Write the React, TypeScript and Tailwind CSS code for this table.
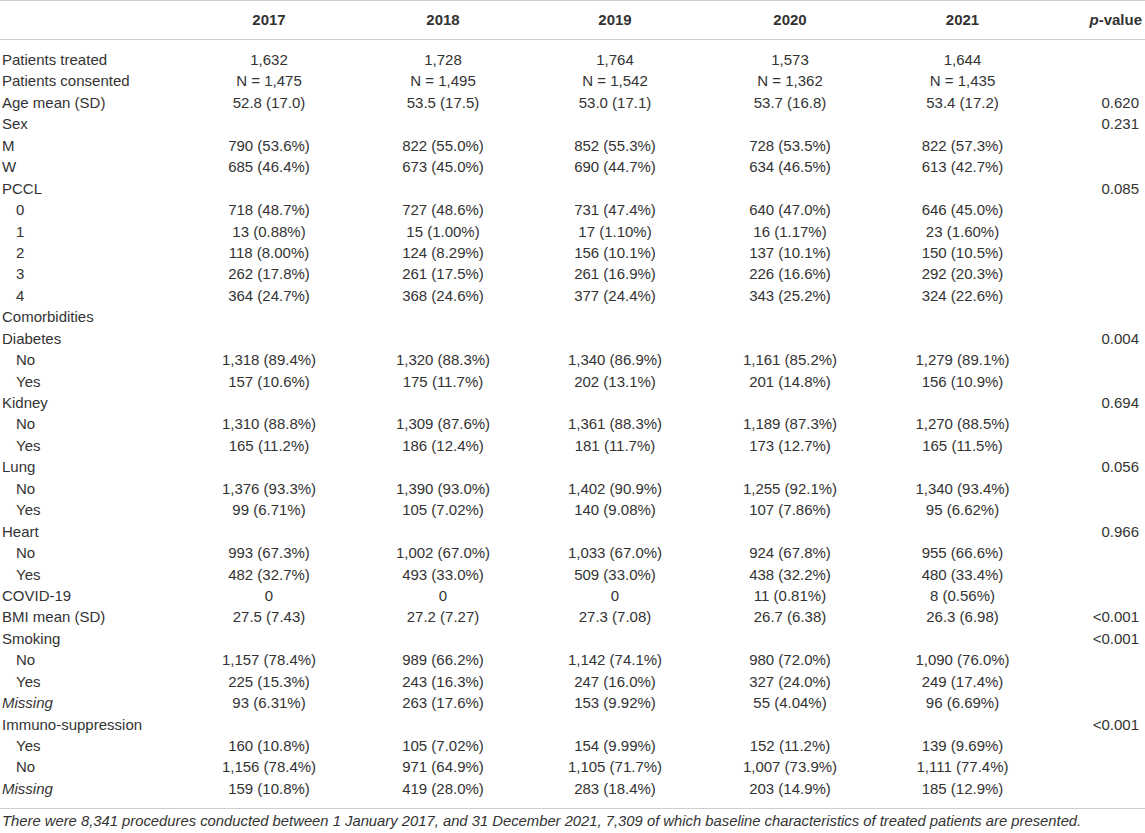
import React from "react";

type Row = { l: string; ind?: boolean; it?: boolean; v?: string[]; p?: string };

const rows: Row[] = [
  { l: "Patients treated", v: ["1,632", "1,728", "1,764", "1,573", "1,644"] },
  { l: "Patients consented", v: ["N = 1,475", "N = 1,495", "N = 1,542", "N = 1,362", "N = 1,435"] },
  { l: "Age mean (SD)", v: ["52.8 (17.0)", "53.5 (17.5)", "53.0 (17.1)", "53.7 (16.8)", "53.4 (17.2)"], p: "0.620" },
  { l: "Sex", p: "0.231" },
  { l: "M", v: ["790 (53.6%)", "822 (55.0%)", "852 (55.3%)", "728 (53.5%)", "822 (57.3%)"] },
  { l: "W", v: ["685 (46.4%)", "673 (45.0%)", "690 (44.7%)", "634 (46.5%)", "613 (42.7%)"] },
  { l: "PCCL", p: "0.085" },
  { l: "0", ind: true, v: ["718 (48.7%)", "727 (48.6%)", "731 (47.4%)", "640 (47.0%)", "646 (45.0%)"] },
  { l: "1", ind: true, v: ["13 (0.88%)", "15 (1.00%)", "17 (1.10%)", "16 (1.17%)", "23 (1.60%)"] },
  { l: "2", ind: true, v: ["118 (8.00%)", "124 (8.29%)", "156 (10.1%)", "137 (10.1%)", "150 (10.5%)"] },
  { l: "3", ind: true, v: ["262 (17.8%)", "261 (17.5%)", "261 (16.9%)", "226 (16.6%)", "292 (20.3%)"] },
  { l: "4", ind: true, v: ["364 (24.7%)", "368 (24.6%)", "377 (24.4%)", "343 (25.2%)", "324 (22.6%)"] },
  { l: "Comorbidities" },
  { l: "Diabetes", p: "0.004" },
  { l: "No", ind: true, v: ["1,318 (89.4%)", "1,320 (88.3%)", "1,340 (86.9%)", "1,161 (85.2%)", "1,279 (89.1%)"] },
  { l: "Yes", ind: true, v: ["157 (10.6%)", "175 (11.7%)", "202 (13.1%)", "201 (14.8%)", "156 (10.9%)"] },
  { l: "Kidney", p: "0.694" },
  { l: "No", ind: true, v: ["1,310 (88.8%)", "1,309 (87.6%)", "1,361 (88.3%)", "1,189 (87.3%)", "1,270 (88.5%)"] },
  { l: "Yes", ind: true, v: ["165 (11.2%)", "186 (12.4%)", "181 (11.7%)", "173 (12.7%)", "165 (11.5%)"] },
  { l: "Lung", p: "0.056" },
  { l: "No", ind: true, v: ["1,376 (93.3%)", "1,390 (93.0%)", "1,402 (90.9%)", "1,255 (92.1%)", "1,340 (93.4%)"] },
  { l: "Yes", ind: true, v: ["99 (6.71%)", "105 (7.02%)", "140 (9.08%)", "107 (7.86%)", "95 (6.62%)"] },
  { l: "Heart", p: "0.966" },
  { l: "No", ind: true, v: ["993 (67.3%)", "1,002 (67.0%)", "1,033 (67.0%)", "924 (67.8%)", "955 (66.6%)"] },
  { l: "Yes", ind: true, v: ["482 (32.7%)", "493 (33.0%)", "509 (33.0%)", "438 (32.2%)", "480 (33.4%)"] },
  { l: "COVID-19", v: ["0", "0", "0", "11 (0.81%)", "8 (0.56%)"] },
  { l: "BMI mean (SD)", v: ["27.5 (7.43)", "27.2 (7.27)", "27.3 (7.08)", "26.7 (6.38)", "26.3 (6.98)"], p: "<0.001" },
  { l: "Smoking", p: "<0.001" },
  { l: "No", ind: true, v: ["1,157 (78.4%)", "989 (66.2%)", "1,142 (74.1%)", "980 (72.0%)", "1,090 (76.0%)"] },
  { l: "Yes", ind: true, v: ["225 (15.3%)", "243 (16.3%)", "247 (16.0%)", "327 (24.0%)", "249 (17.4%)"] },
  { l: "Missing", it: true, v: ["93 (6.31%)", "263 (17.6%)", "153 (9.92%)", "55 (4.04%)", "96 (6.69%)"] },
  { l: "Immuno-suppression", p: "<0.001" },
  { l: "Yes", ind: true, v: ["160 (10.8%)", "105 (7.02%)", "154 (9.99%)", "152 (11.2%)", "139 (9.69%)"] },
  { l: "No", ind: true, v: ["1,156 (78.4%)", "971 (64.9%)", "1,105 (71.7%)", "1,007 (73.9%)", "1,111 (77.4%)"] },
  { l: "Missing", it: true, v: ["159 (10.8%)", "419 (28.0%)", "283 (18.4%)", "203 (14.9%)", "185 (12.9%)"] },
];

const grid = "grid grid-cols-[182px_174px_174px_170px_180px_165px_1fr]";

export default function App() {
  return (
    <div
      className="w-[1145px] bg-white text-[#333] text-[15px]"
      style={{ fontFamily: '"Liberation Sans", Arial, sans-serif' }}
    >
      <div className="border-t border-b border-[#cfcfcf]">
        <div className={`${grid} h-[38px] items-center font-bold`}>
          <div />
          <div className="text-center">2017</div>
          <div className="text-center">2018</div>
          <div className="text-center">2019</div>
          <div className="text-center">2020</div>
          <div className="text-center">2021</div>
          <div className="text-right pr-[3px] whitespace-nowrap">
            <span className="italic">p</span>-value
          </div>
        </div>
      </div>
      <div className="pt-[9px] pb-[9px] border-b border-[#cfcfcf]">
        {rows.map((r, i) => (
          <div key={i} className={`${grid} leading-[21.44px] h-[21.44px]`}>
            <div className={`${r.ind ? "pl-[16px]" : "pl-[2px]"} ${r.it ? "italic" : ""} whitespace-nowrap`}>
              {r.l}
            </div>
            {[0, 1, 2, 3, 4].map((j) => (
              <div key={j} className="text-center whitespace-nowrap">
                {r.v ? r.v[j] : ""}
              </div>
            ))}
            <div className="text-right pr-[6px] whitespace-nowrap">{r.p ?? ""}</div>
          </div>
        ))}
      </div>
      <div className="pl-[2px] pt-[2px] italic text-[14.8px] leading-[20px] whitespace-nowrap">
        There were 8,341 procedures conducted between 1 January 2017, and 31 December 2021, 7,309 of which baseline characteristics of treated patients are presented.
      </div>
    </div>
  );
}
